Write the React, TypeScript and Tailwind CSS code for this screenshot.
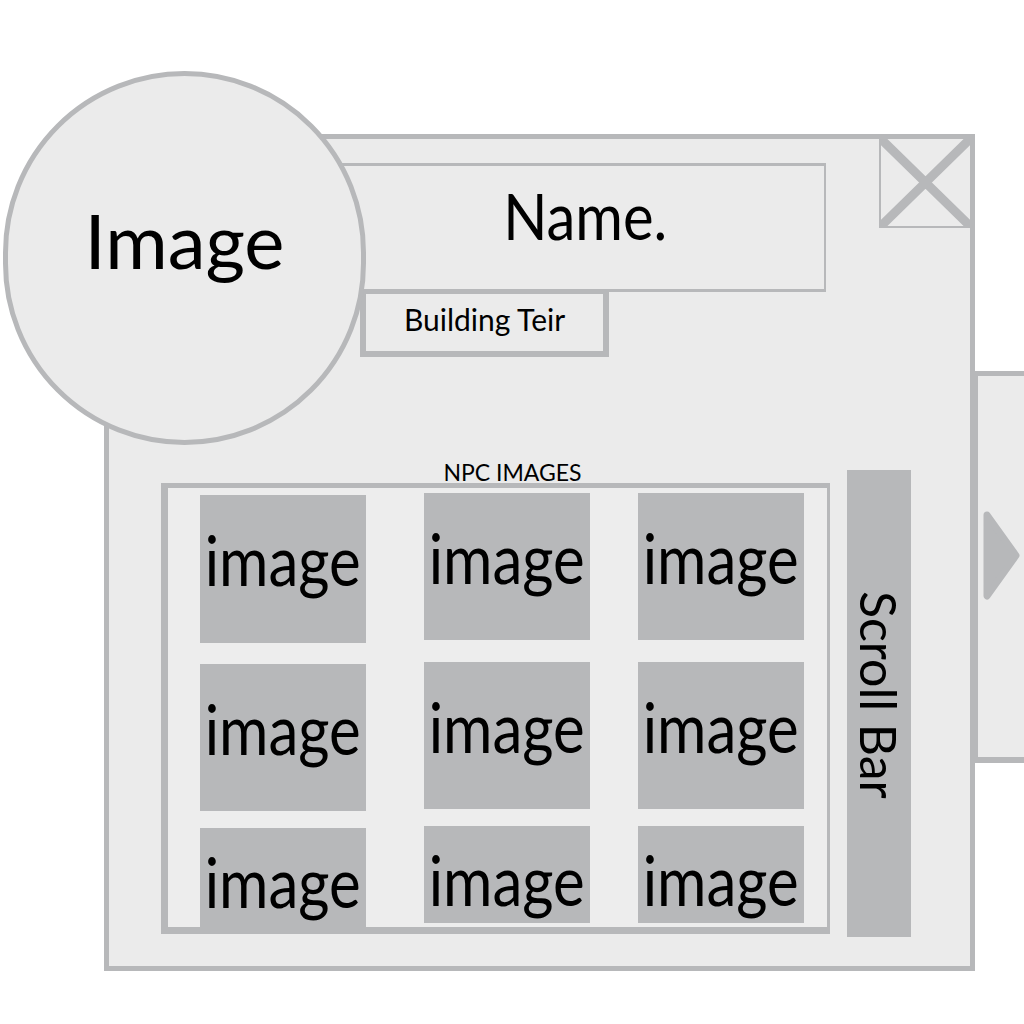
import React from 'react';

const tileText = "shrink-0 font-['Lato',sans-serif] text-[69px] leading-none text-black scale-x-[0.87]";

const Tile: React.FC<{ className: string }> = ({ className }) => (
  <div className={`flex w-[166px] shrink-0 items-start justify-center overflow-hidden bg-[#b7b8ba] ${className}`}>
    <span className={tileText}>image</span>
  </div>
);

const CloseButton: React.FC = () => (
  <button className="ml-auto h-[89px] w-[91px] shrink-0 border-b-2 border-l-2 border-[#b7b8ba] bg-[#ebebeb]">
    <svg className="h-full w-full" viewBox="0 0 89 87" preserveAspectRatio="none">
      <path d="M0 0 L89 87 M89 0 L0 87" stroke="#b7b8ba" strokeWidth={9} />
    </svg>
  </button>
);

const App: React.FC = () => {
  return (
    <div className="relative h-[1024px] w-[1024px] overflow-hidden bg-white font-['Lato',sans-serif]">
      <div className="flex items-start">
        {/* main window */}
        <section className="ml-[104px] mt-[134px] flex h-[837px] w-[871px] shrink-0 flex-col border-[5px] border-[#b7b8ba] bg-[#ebebeb]">
          <div className="flex items-start">
            <div className="ml-[221px] mt-[24px] h-[129px] w-[496px] shrink-0 border-[3px] border-r-2 border-[#b7b8ba] pl-[14px] pt-[18px] text-center">
              <span className="inline-block text-[63px] leading-none text-black scale-x-[0.92]">Name.</span>
            </div>
            <CloseButton />
          </div>

          <div className="-mt-[3px] ml-[251px] h-[68px] w-[249px] border-[6px] border-t-[5px] border-[#b7b8ba] pt-[10px] text-center">
            <span className="text-[30px] leading-none text-black">Building Teir</span>
          </div>

          {/* npc list */}
          <div className="ml-[52px] mt-[104px] flex items-start">
            <div className="flex flex-col">
              <div className="h-[22px] pl-[34px] text-center text-[23px] leading-none text-black">NPC IMAGES</div>
              <div className="flex h-[451px] w-[669px] overflow-hidden border-b-[7px] border-l-[7px] border-r-[3px] border-t-[5px] border-[#b7b8ba] bg-[#ededed]">
                <div className="ml-[32px] flex flex-col pt-[7px]">
                  <Tile className="h-[148px] pt-[30px]" />
                  <Tile className="mt-[21px] h-[147px] pt-[30px]" />
                  <Tile className="mt-[17px] h-[99px] pt-[19px]" />
                </div>
                <div className="ml-[58px] flex flex-col pt-[5px]">
                  <Tile className="h-[147px] pt-[30px]" />
                  <Tile className="mt-[22px] h-[147px] pt-[30px]" />
                  <Tile className="mt-[17px] h-[97px] pt-[19px]" />
                </div>
                <div className="ml-[48px] flex flex-col pt-[5px]">
                  <Tile className="h-[147px] pt-[30px]" />
                  <Tile className="mt-[22px] h-[147px] pt-[30px]" />
                  <Tile className="mt-[17px] h-[97px] pt-[19px]" />
                </div>
              </div>
            </div>
            <div className="ml-[17px] mt-[9px] flex h-[467px] w-[64px] items-center justify-center bg-[#b7b8ba] pb-[17px]">
              <span className="text-[50px] leading-none text-black [writing-mode:vertical-rl]">Scroll Bar</span>
            </div>
          </div>
        </section>

        {/* side tab */}
        <aside className="-ml-px mt-[371px] flex h-[392px] w-[60px] shrink-0 flex-col border-b-[6px] border-l-4 border-t-[5px] border-[#b7b8ba] bg-[#ebebeb] pl-[5px] pt-[134px]">
          <svg width="38" height="91" viewBox="0 0 38 91">
            <path d="M4 5 L33 45.5 L4 86 Z" fill="#b7b8ba" stroke="#b7b8ba" strokeWidth={7} strokeLinejoin="round" />
          </svg>
        </aside>
      </div>

      {/* portrait overlaps the window */}
      <div className="absolute left-[3px] top-[71px] flex h-[374px] w-[363px] flex-col items-center rounded-full border-[5px] border-[#b7b8ba] bg-[#ebebeb] pt-[126px]">
        <span className="text-[76px] leading-none text-black">Image</span>
      </div>
    </div>
  );
};

export default App;
